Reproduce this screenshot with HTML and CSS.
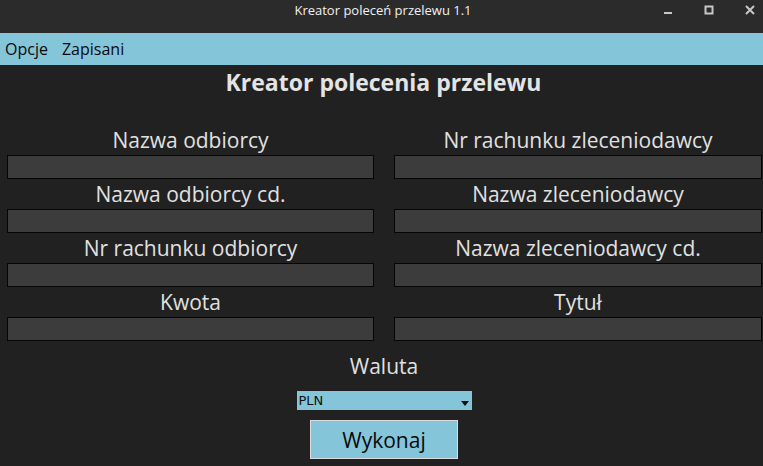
FILE: index.html
```html
<!DOCTYPE html>
<html lang="pl">
<head>
<meta charset="utf-8">
<title>Kreator poleceń przelewu 1.1</title>
<link rel="stylesheet" href="styles.css">
</head>
<body>
<div class="titlebar">
  <span class="title">Kreator poleceń przelewu 1.1</span>
  <div class="controls">
    <svg class="ctl" width="12" height="12" viewBox="0 0 12 12"><rect x="2" y="8" width="8" height="2" fill="#c8c8c8"/></svg>
    <svg class="ctl" width="12" height="12" viewBox="0 0 12 12"><rect x="2.5" y="2.5" width="7" height="7" fill="none" stroke="#c8c8c8" stroke-width="2"/></svg>
    <svg class="ctl" width="12" height="12" viewBox="0 0 12 12"><path d="M2 2L10 10M10 2L2 10" stroke="#c8c8c8" stroke-width="2"/></svg>
  </div>
</div>
<div class="menubar">
  <span class="menu-item">Opcje</span>
  <span class="menu-item">Zapisani</span>
</div>
<h1 class="heading">Kreator polecenia przelewu</h1>
<div class="form-grid">
  <div class="field"><div class="label">Nazwa odbiorcy</div><div class="input"></div></div>
  <div class="field"><div class="label">Nr rachunku zleceniodawcy</div><div class="input"></div></div>
  <div class="field"><div class="label">Nazwa odbiorcy cd.</div><div class="input"></div></div>
  <div class="field"><div class="label">Nazwa zleceniodawcy</div><div class="input"></div></div>
  <div class="field"><div class="label">Nr rachunku odbiorcy</div><div class="input"></div></div>
  <div class="field"><div class="label">Nazwa zleceniodawcy cd.</div><div class="input"></div></div>
  <div class="field"><div class="label">Kwota</div><div class="input"></div></div>
  <div class="field"><div class="label">Tytuł</div><div class="input"></div></div>
</div>
<div class="bottom">
  <div class="label waluta">Waluta</div>
  <div class="select"><span>PLN</span><svg width="8" height="5" viewBox="0 0 8 5"><path d="M0 0H8L4 5Z" fill="#111"/></svg></div>
  <div class="button">Wykonaj</div>
</div>
</body>
</html>
```
FILE: styles.css
```css
html, body {
  margin: 0;
  padding: 0;
  background: #212121;
  font-family: "Open Sans", "Noto Sans", sans-serif;
  width: 763px;
  height: 466px;
  overflow: hidden;
}
.titlebar {
  height: 33px;
  background: #2b2b2b;
  display: flex;
  align-items: center;
  justify-content: center;
  position: relative;
}
.title {
  color: #f0f0f0;
  font-size: 13px;
  margin-top: -13px;
  margin-left: 3px;
}
.controls {
  position: absolute;
  right: 7px;
  top: 4px;
  display: flex;
  gap: 29px;
}
.menubar {
  height: 32px;
  background: #85c5da;
  display: flex;
  align-items: center;
  gap: 14px;
  padding-left: 5px;
}
.menu-item {
  color: #0a0a0a;
  font-size: 16px;
  font-weight: 500;
}
.heading {
  margin: 0;
  height: 34px;
  line-height: 34px;
  text-align: center;
  color: #e4e4e4;
  font-size: 23px;
  font-weight: 700;
  margin-bottom: 26px;
  padding-left: 4px;
}
.form-grid {
  display: grid;
  grid-template-columns: 367px 368px;
  column-gap: 20px;
  padding-left: 7px;
}
.field {
  display: flex;
  flex-direction: column;
}
.label {
  height: 30px;
  line-height: 30px;
  text-align: center;
  color: #e0e0e0;
  font-size: 21px;
  font-weight: 500;
}
.input {
  height: 22px;
  background: #3c3c3c;
  border: 1px solid #050505;
}
.bottom {
  display: flex;
  flex-direction: column;
  align-items: center;
  padding-left: 5px;
}
.waluta {
  height: 50px;
  line-height: 50px;
}
.select {
  width: 175px;
  height: 19px;
  background: #85c5da;
  display: flex;
  align-items: center;
  justify-content: space-between;
  box-sizing: border-box;
  padding: 0 3px 0 2px;
  font-family: "DejaVu Sans", sans-serif;
  font-size: 13px;
  color: #111;
}
.select svg {
  margin-top: 6px;
}
.button {
  margin-top: 10px;
  width: 146px;
  height: 37px;
  background: #85c5da;
  border: 1px solid #dcdcdc;
  display: flex;
  align-items: center;
  justify-content: center;
  font-size: 21px;
  font-weight: 500;
  color: #0a0a0a;
}
```
